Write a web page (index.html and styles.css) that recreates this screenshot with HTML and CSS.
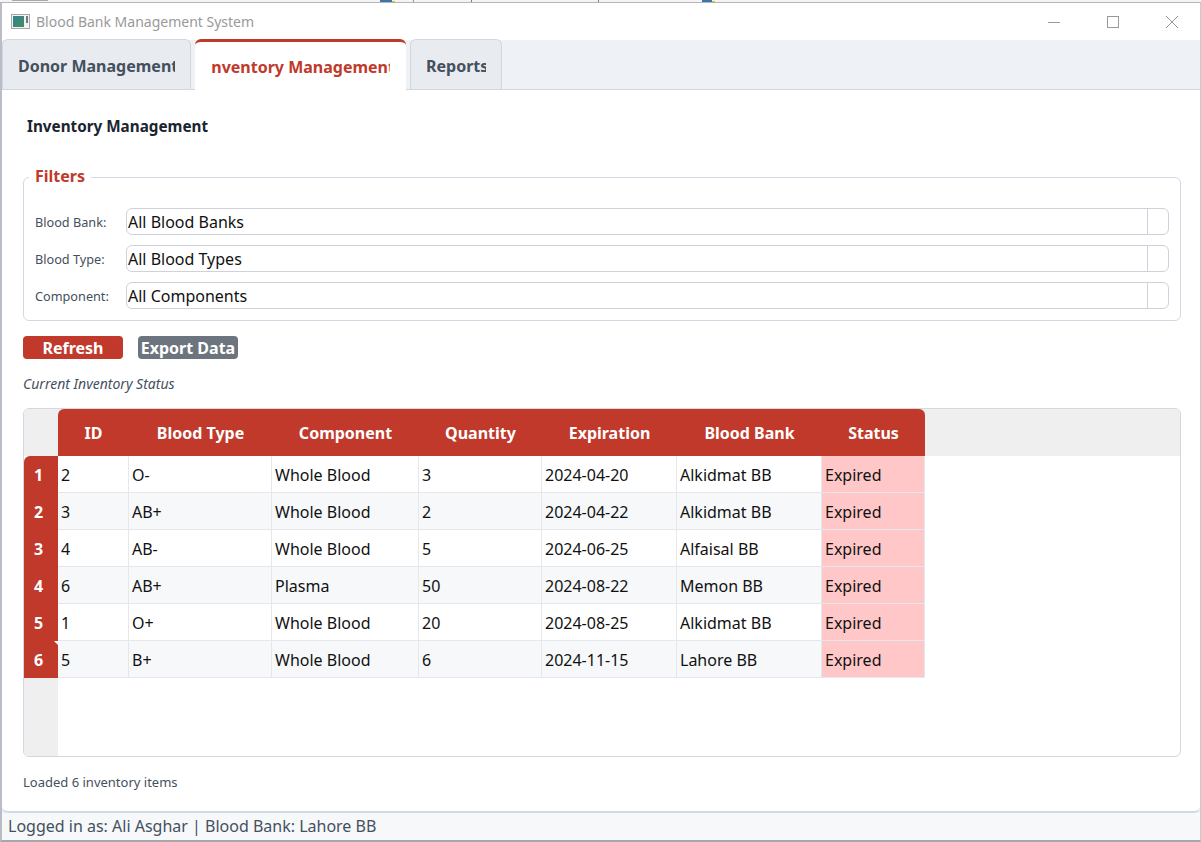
FILE: index.html
```html
<!DOCTYPE html>
<html lang="en">
<head>
<meta charset="utf-8">
<title>Blood Bank Management System</title>
<link rel="stylesheet" href="styles.css">
</head>
<body>
<div class="desktop-strip"></div>
<div class="window">
  <header class="titlebar">
    <svg class="app-icon" width="20" height="16" viewBox="0 0 20 16">
      <defs>
        <linearGradient id="appfill" x1="0" y1="0" x2="1" y2="1">
          <stop offset="0" stop-color="#3a7f9a"/>
          <stop offset="1" stop-color="#3f8f5a"/>
        </linearGradient>
      </defs>
      <rect x="0.5" y="0.5" width="18" height="14" fill="#f2f3f3" stroke="#a3a8ab"/>
      <rect x="2" y="2" width="11" height="11" fill="url(#appfill)"/>
      <rect x="15" y="2" width="2" height="7" fill="#6d7a80"/>
    </svg>
    <span class="app-title">Blood Bank Management System</span>
    <div class="win-controls">
      <svg width="14" height="14" viewBox="0 0 14 14"><path d="M1 7.5h12" stroke="#999" fill="none"/></svg>
      <svg width="14" height="14" viewBox="0 0 14 14"><rect x="1.5" y="1.5" width="11" height="11" stroke="#999" fill="none"/></svg>
      <svg width="14" height="14" viewBox="0 0 14 14"><path d="M1 1l12 12M13 1L1 13" stroke="#999" fill="none"/></svg>
    </div>
  </header>

  <nav class="tabbar">
    <div class="tab tab-donor"><span class="tab-label label-donor"><span>Donor Management</span></span></div>
    <div class="tab tab-active"><span class="tab-label label-inventory"><span>Inventory Management</span></span></div>
    <div class="tab tab-reports"><span class="tab-label label-reports"><span>Reports</span></span></div>
  </nav>

  <main class="pane">
    <h1 class="page-title">Inventory Management</h1>

    <fieldset class="filters">
      <legend>Filters</legend>
      <div class="filter-row"><label>Blood Bank:</label><div class="combo"><span class="combo-text">All Blood Banks</span><span class="combo-arrow"></span></div></div>
      <div class="filter-row"><label>Blood Type:</label><div class="combo"><span class="combo-text">All Blood Types</span><span class="combo-arrow"></span></div></div>
      <div class="filter-row"><label>Component:</label><div class="combo"><span class="combo-text">All Components</span><span class="combo-arrow"></span></div></div>
    </fieldset>

    <div class="actions">
      <button class="btn btn-red">Refresh</button>
      <button class="btn btn-gray">Export Data</button>
    </div>

    <p class="caption">Current Inventory Status</p>

    <section class="table">
      <div class="head-band">
        <div class="row head-row">
          <div class="corner"></div>
          <div class="th th-first">ID</div>
          <div class="th">Blood Type</div>
          <div class="th">Component</div>
          <div class="th">Quantity</div>
          <div class="th">Expiration</div>
          <div class="th">Blood Bank</div>
          <div class="th th-last">Status</div>
        </div>
      </div>
      <div class="body">
        <div class="row"><div class="rh rh-first">1</div><div class="td">2</div><div class="td">O-</div><div class="td">Whole Blood</div><div class="td">3</div><div class="td">2024-04-20</div><div class="td">Alkidmat BB</div><div class="td expired">Expired</div></div>
        <div class="row alt"><div class="rh">2</div><div class="td">3</div><div class="td">AB+</div><div class="td">Whole Blood</div><div class="td">2</div><div class="td">2024-04-22</div><div class="td">Alkidmat BB</div><div class="td expired">Expired</div></div>
        <div class="row"><div class="rh">3</div><div class="td">4</div><div class="td">AB-</div><div class="td">Whole Blood</div><div class="td">5</div><div class="td">2024-06-25</div><div class="td">Alfaisal BB</div><div class="td expired">Expired</div></div>
        <div class="row alt"><div class="rh">4</div><div class="td">6</div><div class="td">AB+</div><div class="td">Plasma</div><div class="td">50</div><div class="td">2024-08-22</div><div class="td">Memon BB</div><div class="td expired">Expired</div></div>
        <div class="row"><div class="rh">5</div><div class="td">1</div><div class="td">O+</div><div class="td">Whole Blood</div><div class="td">20</div><div class="td">2024-08-25</div><div class="td">Alkidmat BB</div><div class="td expired">Expired</div></div>
        <div class="row alt"><div class="rh rh-last">6</div><div class="td">5</div><div class="td">B+</div><div class="td">Whole Blood</div><div class="td">6</div><div class="td">2024-11-15</div><div class="td">Lahore BB</div><div class="td expired">Expired</div></div>
        <div class="rh-filler"></div>
      </div>
    </section>

    <p class="loaded">Loaded 6 inventory items</p>
  </main>

  <footer class="statusbar">Logged in as: Ali Asghar | Blood Bank: Lahore BB</footer>
</div>
</body>
</html>
```
FILE: styles.css
```css
* { box-sizing: border-box; }
html, body { margin: 0; padding: 0; height: 100%; background: #fff; overflow: hidden; }
body { font-family: "Noto Sans", "Open Sans", sans-serif; color: #111; }

.desktop-strip {
  height: 3px;
  border-bottom: 1px solid #b5b5b5;
  background:
    linear-gradient(90deg, #3f74a8, #3f74a8) 380px 0 / 12px 2px no-repeat,
    linear-gradient(90deg, #e0b83c, #e0b83c) 392px 1px / 3px 1px no-repeat,
    linear-gradient(90deg, #d08a50, #d08a50) 413px 0 / 1px 2px no-repeat,
    linear-gradient(90deg, #5a88b8, #5a88b8) 471px 0 / 1px 2px no-repeat,
    linear-gradient(90deg, #5a88b8, #5a88b8) 598px 0 / 1px 2px no-repeat,
    linear-gradient(90deg, #3f74a8, #3f74a8) 702px 0 / 10px 2px no-repeat,
    linear-gradient(90deg, #e0b83c, #e0b83c) 712px 1px / 3px 1px no-repeat,
    linear-gradient(90deg, #aaa, #aaa) 12px 0 / 36px 1px no-repeat,
    #f4f4f4;
}
.window { height: 839px; display: flex; flex-direction: column; border-left: 2px solid #b9bec6; border-right: 1px solid #c8ccd2; border-bottom: 2px solid #a8a8a8; background: #eef1f6; }

.titlebar { height: 37px; flex: none; background: #fff; display: flex; align-items: center; padding-left: 9px; }
.app-icon { flex: none; margin-right: 5px; }
.app-title { font-size: 14px; color: #9a9a9a; white-space: nowrap; }
.win-controls { margin-left: auto; display: flex; gap: 45px; padding-right: 21px; }
.win-controls svg { display: block; }

.tabbar { height: 50px; flex: none; display: flex; align-items: flex-end; gap: 4px; background: #eef1f6; border-bottom: 1px solid #d3d8e0; }
.tab { height: 50px; padding-top: 3px; display: flex; align-items: center; justify-content: center; background: #e8ebef; border: 1px solid #d0d6e2; border-bottom: none; border-radius: 6px 6px 0 0; font-size: 16px; font-weight: 700; color: #45505e; }
.tab-label { display: flex; justify-content: center; overflow: hidden; white-space: nowrap; }
.tab-label > span { flex: none; }
.tab-donor { width: 189px; }
.label-donor { width: 157px; justify-content: flex-start; }
.tab-active { width: 211px; background: #fff; color: #c0392b; border: none; border-top: 3px solid #c0392b; height: 51px; margin-bottom: -1px; position: relative; z-index: 1; padding: 1px 1px 0 0; }
.label-inventory { width: 179px; }
.tab-reports { width: 92px; }
.label-reports { width: 60px; justify-content: flex-start; }

.pane { flex: 1; min-height: 0; background: #fff; padding: 0 19px 0 21px; border-bottom: 2px solid #d3d8e4; border-radius: 0 0 6px 6px; display: flex; flex-direction: column; }
.page-title { margin: 26px 0 0 4px; font-size: 15.25px; line-height: 20px; font-weight: 700; color: #1b2430; }

.filters { margin: 31px 0 0; height: 154px; flex: none; padding: 21px 11px 0 11px; border: 1px solid #d3d8e4; border-radius: 6px; min-width: 0; display: flex; flex-direction: column; }
.filters legend { position: relative; top: -1px; font-size: 16px; line-height: 20px; font-weight: 700; color: #c0392b; padding: 0 6px; margin-left: -6px; }
.filter-row { display: flex; align-items: center; height: 27px; margin-bottom: 10px; }
.filter-row label { width: 91px; flex: none; font-size: 12.7px; color: #45505e; }
.combo { flex: 1; height: 27px; display: flex; border: 1px solid #cfd2da; border-radius: 6px; }
.combo-text { flex: 1; font-size: 16px; line-height: 27px; color: #111; padding-left: 1px; }
.combo-arrow { width: 21px; flex: none; border-left: 1px solid #cfd2da; }

.actions { display: flex; gap: 15px; margin-top: 15px; }
.btn { width: 100px; height: 23px; padding: 2px 0 0; border: none; border-radius: 4px; color: #fff; font-family: inherit; font-size: 16px; font-weight: 700; line-height: 21px; white-space: nowrap; }
.btn-red { background: #c0392b; }
.btn-gray { background: #6c757d; }

.caption { margin: 16px 0 0; font-size: 14px; line-height: 17px; font-style: italic; color: #45505e; }

.table { margin-top: 16px; height: 349px; flex: none; border: 1px solid #d3d8e4; border-radius: 6px; overflow: hidden; display: flex; flex-direction: column; background: #fff; }
.head-band { background: #efefef; height: 47px; flex: none; }
.row { display: grid; grid-template-columns: 34px 71px 143px 147px 123px 135px 145px 103px; justify-content: start; height: 37px; }
.head-row { height: 47px; }
.corner { background: #efefef; }
.th { background: #c0392b; color: #fff; font-size: 16px; font-weight: 700; display: flex; align-items: center; justify-content: center; }
.th-first { border-top-left-radius: 6px; }
.th-last { border-top-right-radius: 6px; }
.body { flex: 1; display: flex; flex-direction: column; }
.rh { background: #c0392b; color: #fff; font-size: 16px; font-weight: 700; display: flex; align-items: center; justify-content: center; padding-right: 5px; }
.rh-first { border-top-left-radius: 6px; }
.rh-last { position: relative; }
.rh-last::after { content: ""; position: absolute; top: 0; right: 0; border-top: 4px solid #fff; border-left: 4px solid transparent; }
.rh-filler { flex: 1; width: 34px; background: #efefef; }
.td { font-size: 16px; line-height: 34px; padding: 2px 0 0 3px; border-right: 1px solid #e4e7ec; border-bottom: 1px solid #e4e7ec; color: #111; white-space: nowrap; overflow: hidden; }
.alt .td { background: #f6f8fa; }
.td.expired, .alt .td.expired { background: #ffc7c7; }

.loaded { margin: 17px 0 0; font-size: 13px; line-height: 17px; color: #45505e; }

.statusbar { height: 27px; flex: none; background: #f6f8fa; font-size: 16px; line-height: 27px; padding-left: 6px; color: #45505e; }
```
